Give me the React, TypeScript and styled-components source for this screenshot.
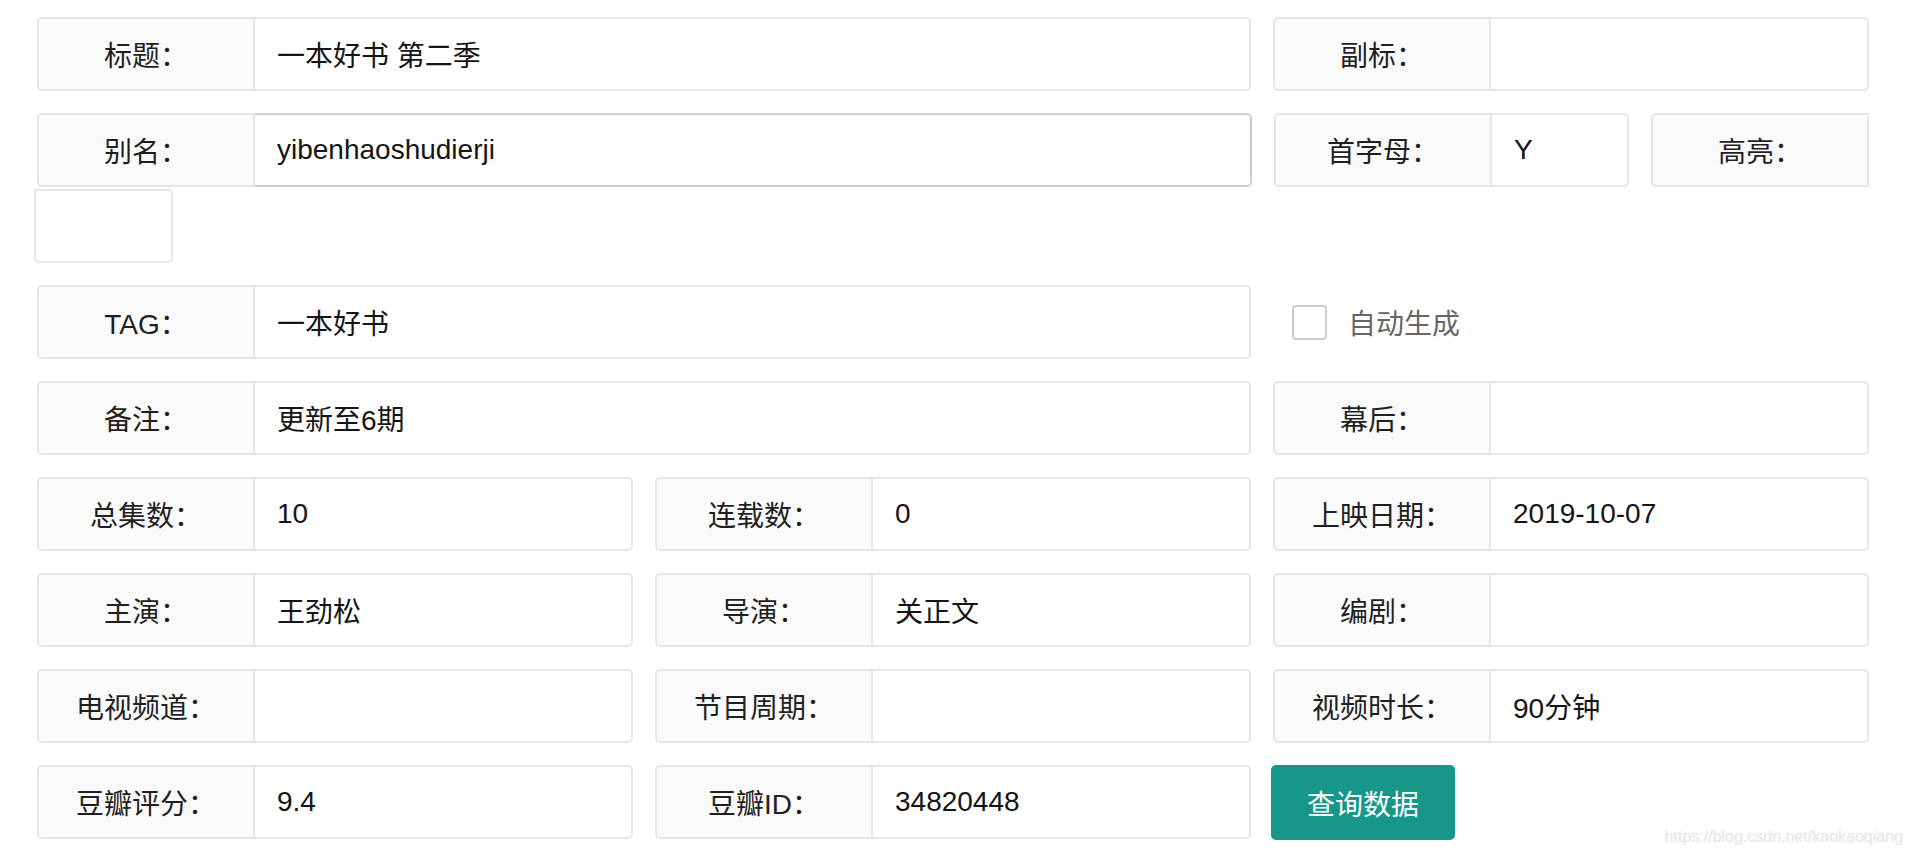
import styled, { createGlobalStyle } from "styled-components";

const GlobalStyle = createGlobalStyle`
  html, body {
    margin: 0;
    padding: 0;
    background: #ffffff;
  }
  body {
    font-family: "Liberation Sans", "Noto Sans CJK SC", sans-serif;
    color: #1a1a1a;
  }
  * { box-sizing: border-box; }
`;

type FieldProps = {
  label: string;
  value?: string;
  wide?: boolean;
  width?: number;
  strong?: boolean;
};

function Field({ label, value = "", wide, width, strong }: FieldProps) {
  return (
    <Group $wide={wide} $width={width}>
      <Label>{label}</Label>
      <Input $strong={strong} defaultValue={value} readOnly />
    </Group>
  );
}

export default function App() {
  return (
    <>
      <GlobalStyle />
      <Page>
        <Form>
          <Row>
            <Field wide label="标题：" value="一本好书 第二季" />
            <Field label="副标：" />
          </Row>

          <WrapRow>
            <Field wide width={1215} label="别名：" value="yibenhaoshudierji" strong />
            <Field width={355} label="首字母：" value="Y" />
            <LoneLabel>高亮：</LoneLabel>
            <LoneInput defaultValue="" readOnly />
          </WrapRow>

          <Row>
            <Field wide label="TAG：" value="一本好书" />
            <CheckCell>
              <CheckBox type="checkbox" />
              <CheckText>自动生成</CheckText>
            </CheckCell>
          </Row>

          <Row>
            <Field wide label="备注：" value="更新至6期" />
            <Field label="幕后：" />
          </Row>

          <Row>
            <Field label="总集数：" value="10" />
            <Field label="连载数：" value="0" />
            <Field label="上映日期：" value="2019-10-07" />
          </Row>

          <Row>
            <Field label="主演：" value="王劲松" />
            <Field label="导演：" value="关正文" />
            <Field label="编剧：" />
          </Row>

          <Row>
            <Field label="电视频道：" />
            <Field label="节目周期：" />
            <Field label="视频时长：" value="90分钟" />
          </Row>

          <Row>
            <Field label="豆瓣评分：" value="9.4" />
            <Field label="豆瓣ID：" value="34820448" />
            <QueryButton>查询数据</QueryButton>
          </Row>
        </Form>
        <Watermark>https://blog.csdn.net/kaokaoqiang</Watermark>
      </Page>
    </>
  );
}

const Page = styled.div`
  position: relative;
  width: 1912px;
  height: 854px;
  padding: 17px 43px 0 37px;
  overflow: hidden;
`;

const Form = styled.div`
  display: flex;
  flex-direction: column;
  gap: 22px;
`;

const Row = styled.div`
  display: grid;
  grid-template-columns: repeat(3, 596px);
  column-gap: 22px;
`;

const WrapRow = styled.div`
  display: flex;
  flex-wrap: wrap;
  column-gap: 22px;
  row-gap: 2px;
  width: 1832px;
`;

const Group = styled.div<{ $wide?: boolean; $width?: number }>`
  display: flex;
  height: 74px;
  grid-column: ${(p) => (p.$wide ? "span 2" : "auto")};
  width: ${(p) => (p.$width ? `${p.$width}px` : "auto")};
`;

const Label = styled.div`
  flex: 0 0 218px;
  display: flex;
  align-items: center;
  justify-content: center;
  background: #fafafa;
  border: 2px solid #e6e6e6;
  border-radius: 5px 0 0 5px;
  font-size: 28px;
  color: #1f1f1f;
  white-space: nowrap;
`;

const Input = styled.input<{ $strong?: boolean }>`
  flex: 1;
  min-width: 0;
  height: 100%;
  margin: 0;
  padding: 0 22px;
  border: 2px solid ${(p) => (p.$strong ? "#cfcfcf" : "#e6e6e6")};
  border-left: none;
  border-radius: 0 5px 5px 0;
  background: #ffffff;
  font-family: "Liberation Sans", "Noto Sans CJK SC", sans-serif;
  font-size: 28px;
  color: #141414;
  outline: none;
  box-shadow: ${(p) => (p.$strong ? "inset 0 1px 2px rgba(0,0,0,0.06)" : "none")};
`;

const LoneLabel = styled(Label)`
  flex: 0 0 218px;
  height: 74px;
  border-radius: 5px 0 0 5px;
`;

const LoneInput = styled.input`
  width: 139px;
  height: 74px;
  margin: 0 0 0 -3px;
  border: 2px solid #e6e6e6;
  border-radius: 0 5px 5px 5px;
  background: #ffffff;
  outline: none;
`;

const CheckCell = styled.div`
  display: flex;
  align-items: center;
  gap: 21px;
  padding-left: 19px;
  height: 74px;
`;

const CheckBox = styled.input`
  appearance: none;
  width: 35px;
  height: 35px;
  margin: 0;
  border: 2px solid #cccccc;
  border-radius: 4px;
  background: #ffffff;
`;

const CheckText = styled.span`
  font-size: 28px;
  color: #666666;
`;

const QueryButton = styled.button`
  justify-self: start;
  width: 184px;
  height: 75px;
  margin-left: -2px;
  border: none;
  border-radius: 5px;
  background: #17968a;
  color: #ffffff;
  font-family: "Liberation Sans", "Noto Sans CJK SC", sans-serif;
  font-size: 28px;
  cursor: pointer;
`;

const Watermark = styled.div`
  position: absolute;
  right: 9px;
  bottom: 8px;
  font-family: "Liberation Sans", sans-serif;
  font-size: 16px;
  color: #e8e8e8;
  text-shadow: 0 0 1px rgba(210, 210, 210, 0.35);
`;
